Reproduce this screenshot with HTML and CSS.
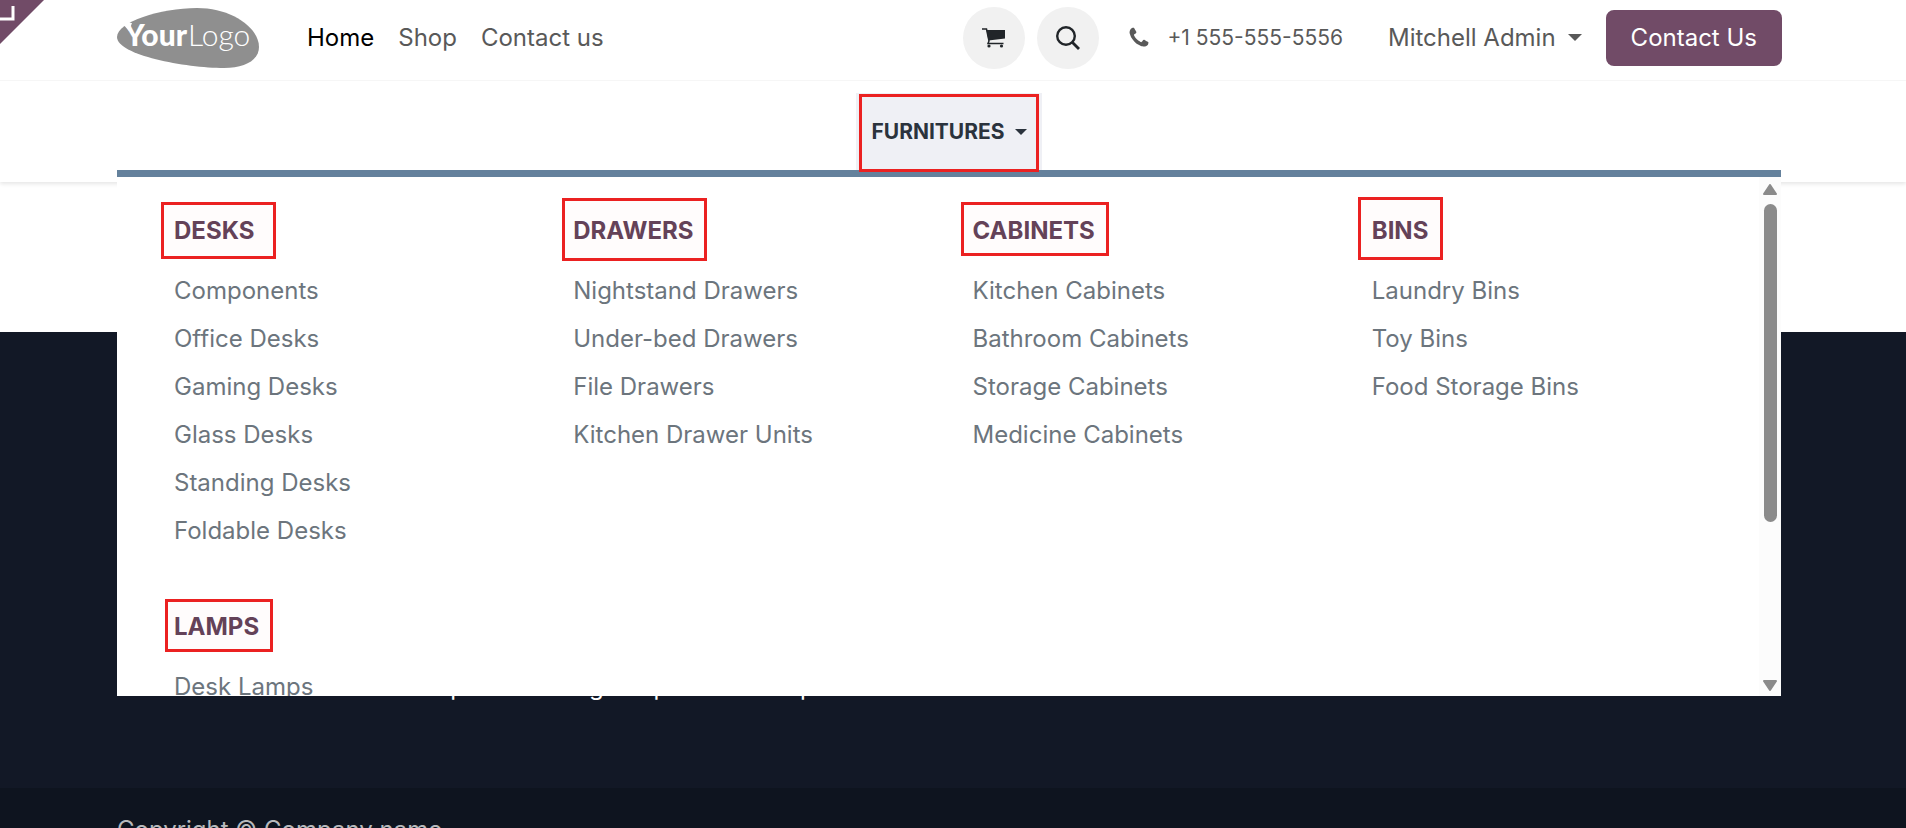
FILE: index.html
```html
<!DOCTYPE html>
<html lang="en">
<head>
<meta charset="utf-8">
<title>Home | My Website</title>
<link rel="stylesheet" href="styles.css">
</head>
<body>
<header class="header">
  <button class="corner" type="button" aria-label="Open backend">
    <svg viewBox="0 0 44 44" width="44" height="44"><path d="M0 0H44L0 44Z" fill="#714b67"/><path d="M0 19H13V6" fill="none" stroke="#fff" stroke-width="3"/></svg>
  </button>
  <div class="topbar">
    <a class="logo" href="#" aria-label="Your Logo">
      <svg viewBox="0 0 142 60" width="142" height="60">
        <path d="M0 29C0 14 43 0 80 0C115 0 142 20 142 39C142 52 128 60 107 60C68 60 0 47 0 29Z" fill="#8f8f8f"/>
        <path d="M5 15H15L12 23Z" fill="#fff"/>
        <text class="logo-bold" x="8" y="38">Your</text>
        <text class="logo-thin" x="71" y="38">Logo</text>
      </svg>
    </a>
    <nav class="main-nav">
      <a class="active" href="#">Home</a>
      <a href="#">Shop</a>
      <a href="#">Contact us</a>
    </nav>
    <div class="tools">
      <button class="round" type="button" aria-label="Cart">
        <svg viewBox="0 0 24 20" width="24" height="20"><path d="M0 1H4.500L7 13L6 15.500H21.500" fill="none" stroke="#212529" stroke-width="1.500"/><path d="M4.500 2H23V10.500L6.500 12.500Z" fill="#212529"/><circle cx="7" cy="18" r="1.600" fill="#212529"/><circle cx="19.500" cy="18" r="1.600" fill="#212529"/></svg>
      </button>
      <button class="round" type="button" aria-label="Search">
        <svg viewBox="0 0 24 24" width="24" height="24"><circle cx="10" cy="10" r="8.800" fill="none" stroke="#212529" stroke-width="2.400"/><path d="M16 16L23 23" stroke="#212529" stroke-width="2.800"/></svg>
      </button>
    </div>
    <a class="phone" href="#">
      <svg viewBox="0 0 1792 1792" width="24" height="24"><path fill="currentColor" d="M1600 1240q0 27-10 70.500t-21 68.500q-21 50-122 106-94 51-186 51-27 0-53-3.500t-57-12.500-47-14.500-55.500-20.500-49.500-18q-98-35-175-83-127-79-264-216t-216-264q-48-77-83-175-3-9-18-49.500t-20.500-55.500-14.500-47-12.500-57-3.500-53q0-92 51-186 56-101 106-122 25-11 68.500-21t70.500-10q14 0 21 3 18 6 53 76 11 19 30 54t35 63.500 31 53.500q3 4 17.500 25t21.500 35.500 7 28.500q0 20-28.500 50t-62 55-62 53-28.500 46q0 9 5 22.500t8.500 20.500 14 24 11.500 19q76 137 174 235t235 174q2 1 19 11.500t24 14 20.500 8.500 22.500 5q18 0 46-28.500t53-62 55-62 50-28.500q14 0 28.500 7t35.500 21.500 25 17.500q25 15 53.500 31t63.500 35 54 30q70 35 76 53 3 7 3 21z"/></svg>
      <span>+1 555-555-5556</span>
    </a>
    <button class="user" type="button">Mitchell Admin
      <svg viewBox="0 0 14 7" width="14" height="7"><path d="M0 0H14L7 7Z" fill="currentColor"/></svg>
    </button>
    <a class="cta" href="#">Contact Us</a>
  </div>
  <div class="subbar">
    <button class="mega-toggle" type="button" aria-expanded="true">FURNITURES
      <svg viewBox="0 0 12 6" width="12" height="6"><path d="M0 0H12L6 6Z" fill="currentColor"/></svg>
    </button>
    <div class="mega">
      <div class="mega-grid">
        <section>
          <h2 class="mark-desks"><a href="#">DESKS</a></h2>
          <a href="#">Components</a><a href="#">Office Desks</a><a href="#">Gaming Desks</a><a href="#">Glass Desks</a><a href="#">Standing Desks</a><a href="#">Foldable Desks</a>
        </section>
        <section>
          <h2 class="mark-drawers"><a href="#">DRAWERS</a></h2>
          <a href="#">Nightstand Drawers</a><a href="#">Under-bed Drawers</a><a href="#">File Drawers</a><a href="#">Kitchen Drawer Units</a>
        </section>
        <section>
          <h2 class="mark-cabinets"><a href="#">CABINETS</a></h2>
          <a href="#">Kitchen Cabinets</a><a href="#">Bathroom Cabinets</a><a href="#">Storage Cabinets</a><a href="#">Medicine Cabinets</a>
        </section>
        <section>
          <h2 class="mark-bins"><a href="#">BINS</a></h2>
          <a href="#">Laundry Bins</a><a href="#">Toy Bins</a><a href="#">Food Storage Bins</a>
        </section>
        <section>
          <h2 class="mark-lamps"><a href="#">LAMPS</a></h2>
          <a href="#">Desk Lamps</a>
        </section>
      </div>
      <div class="scrollbar" aria-hidden="true">
        <svg viewBox="0 0 14 11" width="14" height="11"><path d="M7 1L13 10H1Z" fill="#8b8b8b" stroke="#8b8b8b" stroke-width="2" stroke-linejoin="round"/></svg>
        <div class="track"><div class="thumb"></div></div>
        <svg viewBox="0 0 14 11" width="14" height="11"><path d="M7 10L13 1H1Z" fill="#8b8b8b" stroke="#8b8b8b" stroke-width="2" stroke-linejoin="round"/></svg>
      </div>
    </div>
  </div>
</header>
<main class="content"></main>
<footer class="footer">
  <div class="footer-body">
    <p>Our products are designed for small to medium size companies willing to optimize their performance.</p>
  </div>
  <div class="copyright">Copyright © Company name</div>
</footer>
</body>
</html>
```

FILE: styles.css
```css
* { box-sizing: border-box; }

body {
  display: flex;
  flex-direction: column;
  height: 100vh;
  margin: 0;
  overflow: hidden;
  background: #fff;
  font: 24px/36px Inter, "Liberation Sans", sans-serif;
}

a { color: inherit; text-decoration: none; }
button { padding: 0; border: 0; background: none; color: inherit; font: inherit; }
svg { display: block; flex: none; }

.header {
  position: relative;
  z-index: 1;
  flex: none;
  background: #fff;
  box-shadow: 0 2px 4px rgba(0, 0, 0, .1);
}

.corner { position: absolute; top: 0; left: 0; }

.topbar {
  display: flex;
  align-items: center;
  height: 81px;
  padding: 0 124px 5px 117px;
  border-bottom: 1px solid #f6f6f6;
  color: #595959;
}

.logo-bold { fill: #fff; font: 900 30px Lato, sans-serif; }
.logo-thin { fill: #fff; font: 300 30px Lato, sans-serif; }

.main-nav { display: flex; gap: 24px; margin-left: 48px; }
.main-nav .active { color: #000; }

.tools { display: flex; gap: 12px; margin-left: auto; }
.round {
  display: grid;
  place-items: center;
  width: 62px;
  height: 62px;
  border-radius: 50%;
  background: #f1f1f1;
}

.phone { display: flex; align-items: center; gap: 16px; margin-left: 28px; font-size: 21px; }
.user { display: flex; align-items: center; gap: 12px; margin-left: 45px; }
.cta {
  margin-left: 24px;
  padding: 10px 25px;
  border-radius: 8px;
  background: #714b67;
  color: #fff;
}

.subbar {
  position: relative;
  display: flex;
  justify-content: center;
  padding: 12px 125px 12px 117px;
}

.mega-toggle {
  position: relative;
  display: flex;
  align-items: center;
  gap: 10px;
  height: 77px;
  padding: 0 15px;
  background: #eff0f5;
  color: #2b333d;
  font-size: 21px;
  font-weight: 700;
}
.mega-toggle::after {
  content: "";
  position: absolute;
  z-index: 1;
  inset: 1px 3px -2px;
  border: 3px solid #eb2121;
}

.mega {
  position: absolute;
  top: 89px;
  left: 117px;
  right: 125px;
  display: flex;
  height: calc(100vh - 302px);
  overflow: hidden;
  border-top: 7px solid #64819c;
  background: #fff;
}
.mega-grid {
  flex: 1;
  display: grid;
  grid-template-columns: repeat(4, 1fr);
  align-content: start;
  gap: 48px 44px;
  padding: 30px 32px 0 57px;
  color: #6c757d;
  line-height: 48px;
}
.mega-grid section > a { display: block; }
.mega-grid h2 {
  position: relative;
  width: fit-content;
  margin: 0 0 12px;
  color: #63435a;
  font-size: 24px;
  font-weight: 700;
}
.mega-grid h2::after {
  content: "";
  position: absolute;
  border: 3px solid #eb2121;
  background: rgba(235, 33, 33, .01);
}
.mark-desks::after { inset: -5px -22px -4px -13px; }
.mark-drawers::after { inset: -9px -13px -6px -11px; }
.mark-cabinets::after { inset: -5px -14px -1px -12px; }
.mark-bins::after { inset: -10px -15px -5px -14px; }
.mark-lamps::after { inset: -4px -14px -1px -9px; }

.scrollbar {
  display: flex;
  flex-direction: column;
  align-items: center;
  gap: 9px;
  width: 22px;
  padding: 7px 0 5px;
  background: #fcfcfc;
}
.track { flex: 1; }
.thumb { width: 13px; height: 68%; border-radius: 7px; background: #8b8b8b; }

.content { flex: none; height: 150px; }

.footer { display: flex; flex-direction: column; flex: none; background: #121826; color: #fff; }
.footer-body {
  display: flex;
  flex-direction: column;
  justify-content: flex-end;
  height: 456px;
  padding: 0 860px 83px 401px;
}
.footer-body p { margin: 0; }
.copyright { padding: 24px 117px; background: #0e141f; color: #b7b9bc; }
```
